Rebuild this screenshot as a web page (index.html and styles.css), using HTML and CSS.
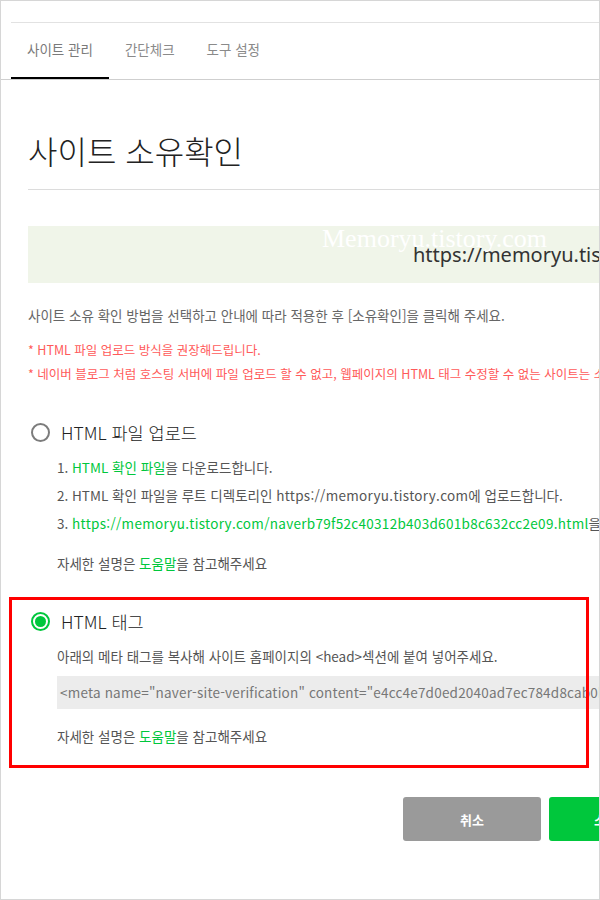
FILE: index.html
```html
<!DOCTYPE html>
<html lang="ko">
<head>
<meta charset="utf-8">
<title>사이트 소유확인</title>
<link rel="stylesheet" href="styles.css">
</head>
<body>
<div class="frame">
  <div class="topline"></div>
  <nav class="tabs">
    <a class="tab active">사이트 관리</a>
    <a class="tab">간단체크</a>
    <a class="tab">도구 설정</a>
  </nav>
  <main class="content">
    <h1 class="title">사이트 소유확인</h1>
    <div class="site-box">
      <span class="site-url">https://memoryu.tistory.com</span>
      <span class="watermark">Memoryu.tistory.com</span>
    </div>
    <p class="intro">사이트 소유 확인 방법을 선택하고 안내에 따라 적용한 후 [소유확인]을 클릭해 주세요.</p>
    <p class="note first">* HTML 파일 업로드 방식을 권장해드립니다.</p>
    <p class="note">* 네이버 블로그 처럼 호스팅 서버에 파일 업로드 할 수 없고, 웹페이지의 HTML 태그 수정할 수 없는 사이트는 소유확인이 불가능합니다.</p>

    <section class="method">
      <label class="radio-row">
        <span class="radio"></span>
        <span class="radio-label">HTML 파일 업로드</span>
      </label>
      <ol class="steps">
        <li>1. <a class="link">HTML 확인 파일</a>을 다운로드합니다.</li>
        <li>2. HTML 확인 파일을 루트 디렉토리인 <span class="latin">https://memoryu.tistory.com</span>에 업로드합니다.</li>
        <li>3. <a class="link latin">https://memoryu.tistory.com/naverb79f52c40312b403d601b8c632cc2e09.html</a>을 브라우저에서 확인합니다.</li>
      </ol>
      <p class="help">자세한 설명은 <a class="link">도움말</a>을 참고해주세요</p>
    </section>

    <section class="method selected">
      <div class="highlight"></div>
      <label class="radio-row">
        <span class="radio checked"></span>
        <span class="radio-label">HTML 태그</span>
      </label>
      <p class="desc">아래의 메타 태그를 복사해 사이트 홈페이지의 &lt;head&gt;섹션에 붙여 넣어주세요.</p>
      <div class="code">&lt;meta name="naver-site-verification" content="e4cc4e7d0ed2040ad7ec784d8cab0b1f2d3e4a5b" /&gt;</div>
      <p class="help">자세한 설명은 <a class="link">도움말</a>을 참고해주세요</p>
    </section>

    <div class="buttons">
      <button class="btn cancel">취소</button>
      <button class="btn confirm">소유확인</button>
    </div>
  </main>
</div>
</body>
</html>
```

FILE: styles.css
```css
* { box-sizing: border-box; }

body {
  margin: 0;
  background: #fff;
  font-family: "Noto Sans CJK KR", "Noto Sans", sans-serif;
}

.frame {
  width: 600px;
  height: 900px;
  border: 1px solid #d6d6d6;
  overflow: hidden;
  background: #fff;
}

.topline {
  margin: 21px 0 0 10px;
  border-top: 1px solid #e2e2e2;
}

.tabs {
  display: flex;
  height: 57px;
  padding-left: 10px;
  border-bottom: 1px solid #cfcfcf;
}

.tab {
  display: flex;
  align-items: center;
  padding: 0 16px 2px;
  font-size: 13.5px;
  color: #8a8a8a;
  border-bottom: 2px solid transparent;
}

.tab.active {
  color: #7a7a7a;
  border-bottom-color: #000;
}

.content {
  padding-left: 27px;
  width: 800px;
}

.title {
  margin: 50px 0 0;
  padding-bottom: 19px;
  font-size: 32px;
  line-height: 40px;
  font-weight: 300;
  color: #222;
  border-bottom: 1px solid #dcdcdc;
}

.site-box {
  position: relative;
  margin-top: 36px;
  height: 57px;
  background: #f0f5e9;
  display: flex;
  align-items: center;
  padding-left: 385px;
  white-space: nowrap;
}

.site-url {
  font-size: 20px;
  color: #333;
  font-family: "Noto Sans", "Noto Sans CJK KR", sans-serif;
}

.watermark {
  position: absolute;
  left: 294px;
  top: 0;
  font-family: "Liberation Serif", serif;
  font-size: 26px;
  line-height: 26px;
  color: #fff;
}

.intro {
  margin: 22px 0 0;
  font-size: 13.5px;
  line-height: 20px;
  color: #666;
}

.note {
  margin: 4px 0 0;
  font-size: 12.5px;
  line-height: 20px;
  color: #ff5a5a;
  white-space: nowrap;
}

.note.first { margin-top: 15px; }

.method {
  position: relative;
  padding-top: 36px;
}

.radio-row {
  display: flex;
  align-items: center;
  height: 24px;
  padding-left: 3px;
}

.radio {
  width: 19px;
  height: 19px;
  border: 2px solid #7c7c7c;
  border-radius: 50%;
  margin-right: 11px;
  position: relative;
}

.radio.checked {
  border-color: #00c73c;
}

.radio.checked::after {
  content: "";
  position: absolute;
  left: 2px;
  top: 2px;
  width: 11px;
  height: 11px;
  border-radius: 50%;
  background: #00c73c;
}

.radio-label {
  font-size: 17.5px;
  font-weight: 300;
  color: #222;
}

.steps {
  list-style: none;
  margin: 13px 0 0;
  padding-left: 29px;
}

.steps li {
  font-size: 13.5px;
  line-height: 20px;
  color: #555;
  margin-top: 8px;
  white-space: nowrap;
}

.steps li:first-child { margin-top: 0; }

.latin { letter-spacing: 0.3px; }

.link { color: #00c73c; }

.help {
  margin: 20px 0 0;
  padding-left: 29px;
  font-size: 13.5px;
  line-height: 20px;
  color: #555;
}

.desc {
  margin: 13px 0 0;
  padding-left: 29px;
  font-size: 13.5px;
  line-height: 20px;
  color: #555;
}

.code {
  margin: 10px 0 0 29px;
  height: 33px;
  line-height: 33px;
  padding-left: 3px;
  background: #ececec;
  color: #777;
  font-size: 13.5px;
  letter-spacing: 0.2px;
  white-space: nowrap;
  overflow: hidden;
}

.selected .help { margin-top: 17px; }

.highlight {
  position: absolute;
  left: -19px;
  top: 24px;
  width: 580px;
  height: 171px;
  border: 3px solid #ff0000;
  pointer-events: none;
}

.buttons {
  display: flex;
  gap: 8px;
  margin-top: 51px;
  padding-left: 375px;
}

.btn {
  width: 138px;
  height: 44px;
  border: 0;
  border-radius: 3px;
  color: #fff;
  font-family: inherit;
  font-size: 13px;
  font-weight: 700;
}

.btn.cancel { background: #9a9a9a; }
.btn.confirm { background: #00c73c; }
```
